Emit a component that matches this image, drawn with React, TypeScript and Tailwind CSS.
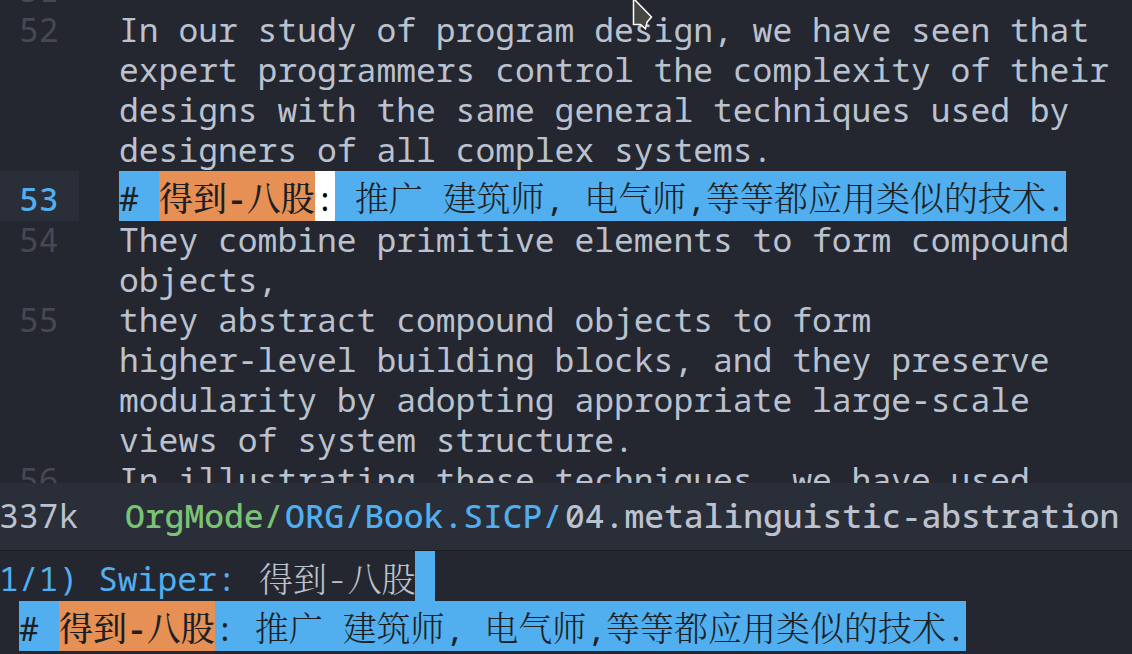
import { Fragment, useState } from "react";

type Entry = { number: number; lines: string[] };

const before: Entry[] = [
  {
    number: 52,
    lines: [
      "In our study of program design, we have seen that",
      "expert programmers control the complexity of their",
      "designs with the same general techniques used by",
      "designers of all complex systems.",
    ],
  },
];

const after: Entry[] = [
  {
    number: 54,
    lines: ["They combine primitive elements to form compound", "objects,"],
  },
  {
    number: 55,
    lines: [
      "they abstract compound objects to form",
      "higher-level building blocks, and they preserve",
      "modularity by adopting appropriate large-scale",
      "views of system structure.",
    ],
  },
  {
    number: 56,
    lines: ["In illustrating these techniques, we have used"],
  },
];

const REST = " 推广 建筑师, 电气师,等等都应用类似的技术.";

/* Han glyphs are set one pixel larger than the Latin text. */
function Mixed({ text, bold = false }: { text: string; bold?: boolean }) {
  return (
    <>
      {text.split(/([\u4e00-\u9fff]+)/).map((part, i) =>
        i % 2 === 1 ? (
          <span
            key={i}
            lang="zh-CN"
            className={`font-['Noto_Serif_CJK_SC','Noto_Sans_CJK_SC',serif] text-[34px] leading-none ${
              bold ? "font-medium" : "font-light"
            }`}
          >
            {part}
          </span>
        ) : (
          <Fragment key={i}>{part}</Fragment>
        ),
      )}
    </>
  );
}

function BufferRow({ number, lines }: Entry) {
  return (
    <div className="flex shrink-0 leading-10">
      <span className="w-[119px] shrink-0 pl-[19px] text-[#484854]">{number}</span>
      <p>
        {lines.map((line) => (
          <span key={line} className="block">
            {line}
          </span>
        ))}
      </p>
    </div>
  );
}

function Match({ cursor = false }: { cursor?: boolean }) {
  return (
    <p className="flex h-[50px] bg-[#51afef] leading-[44px] text-[#1c1f24]">
      <span className="w-10 pt-1.5">#</span>
      <mark className="w-[156px] bg-[#e69055] pt-1.5 font-semibold text-[#1c1f24]">
        <Mixed text="得到-八股" bold />
      </mark>
      <span className={cursor ? "w-5 bg-white pt-1.5 text-black" : "w-5 pt-1.5"}>:</span>
      <span className="pt-1.5">
        <Mixed text={REST} />
      </span>
    </p>
  );
}

function Pointer() {
  return (
    <svg
      className="pointer-events-none absolute left-[632px] top-0"
      width="22"
      height="30"
      viewBox="0 0 22 30"
      aria-hidden="true"
    >
      <path
        d="M1.5 -2V24.5H8.5L13.5 28.8L15 22.2L19.5 17L3 0Z"
        fill="#464642"
        stroke="#fff"
        strokeWidth="1.5"
      />
    </svg>
  );
}

export default function App() {
  const [query, setQuery] = useState("得到-八股");

  return (
    <div className="relative flex h-screen flex-col overflow-hidden whitespace-pre bg-[#242730] font-['Droid_Sans_Mono','Noto_Sans_Mono','DejaVu_Sans_Mono',monospace] text-[33px] text-[#bbc2cf]">
      <main className="flex min-h-0 flex-1 flex-col overflow-hidden">
        <div className="flex h-2.5 shrink-0 flex-col justify-end overflow-hidden pl-[19px] leading-10 text-[#484854]">
          <span>51</span>
        </div>
        {before.map((entry) => (
          <BufferRow key={entry.number} {...entry} />
        ))}
        <div className="-mb-px mt-px flex shrink-0">
          <span className="mr-10 w-[79px] shrink-0 bg-[#2a2e38] pl-[19px] pt-1.5 font-medium leading-[44px] text-[#51afef]">
            53
          </span>
          <Match cursor />
        </div>
        {after.map((entry) => (
          <BufferRow key={entry.number} {...entry} />
        ))}
      </main>

      <footer className="flex h-[68px] shrink-0 items-center border-b border-[#1c1f24] bg-[#2a2e38] pb-0.5">
        <span className="-ml-px w-[126px] shrink-0">337k</span>
        <span className="flex font-medium">
          <span className="w-40 text-[#7bc275]">OrgMode/</span>
          <span className="w-[280px] text-[#51afef]">ORG/Book.SICP/</span>
          <span className="[font-feature-settings:'zero'_0]">04.metalinguistic-abstration</span>
        </span>
      </footer>

      <section className="h-[103px] shrink-0">
        <div className="-ml-px flex h-[50px] leading-[44px]">
          <label htmlFor="swiper" className="w-[260px] shrink-0 pt-1.5 text-[#51afef]">
            1/1) Swiper:
          </label>
          <input
            id="swiper"
            value={query}
            onChange={(e) => setQuery(e.target.value)}
            className="w-[156px] bg-transparent pt-1.5 font-['Droid_Sans_Mono','Noto_Sans_Mono','DejaVu_Sans_Mono','Noto_Serif_CJK_SC','Noto_Sans_CJK_SC',monospace] text-[34px] font-light caret-transparent outline-none"
          />
          <span className="w-5 bg-[#51afef]" />
        </div>
        <div className="flex pl-[19px]">
          <Match />
        </div>
      </section>
      <Pointer />
    </div>
  );
}
